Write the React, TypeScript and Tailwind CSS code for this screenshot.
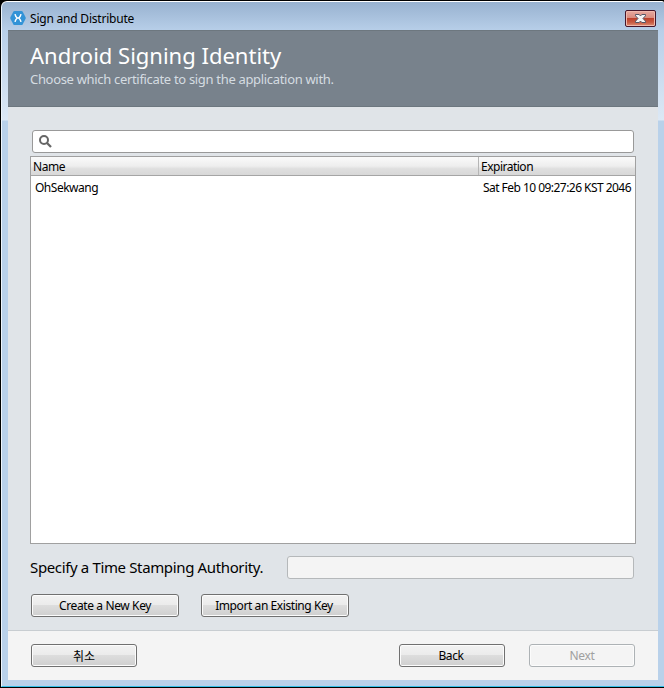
import React from "react";

type ButtonProps = {
  children: React.ReactNode;
  className?: string;
  disabled?: boolean;
};

function Button({ children, className = "", disabled = false }: ButtonProps) {
  const look = disabled
    ? "border-[#adb2b5] bg-[#f4f4f4] text-[#a0a0a0]"
    : "border-[#707070] bg-[linear-gradient(#f2f2f2_0%,#ebebeb_50%,#dddddd_50%,#cfcfcf_100%)] text-black";
  return (
    <button
      disabled={disabled}
      className={`flex h-[23px] shrink-0 items-center justify-center rounded-[3px] border text-[12px] leading-[16px] shadow-[inset_0_0_0_1px_#fcfcfc] ${look} ${className}`}
    >
      {children}
    </button>
  );
}

function AppIcon() {
  return (
    <svg width="16" height="16" viewBox="0 0 16 16" className="shrink-0">
      <path
        d="M4.600 .9h6.800q.8 0 1.200.7l3 5.700q.3.700 0 1.400l-3 5.700q-.4.700-1.200.700H4.600q-.8 0-1.200-.7L.4 8.700q-.3-.7 0-1.400l3-5.700Q3.800.9 4.600.9z"
        fill="#3293d7"
      />
      <path
        d="M5 4.200Q5.500 6.500 7.200 8 5.500 9.500 5 11.800M11 4.200Q10.500 6.500 8.800 8 10.500 9.500 11 11.800M7 8h2"
        fill="none"
        stroke="#fff"
        strokeWidth="1.500"
      />
    </svg>
  );
}

export default function App() {
  return (
    <div className="flex h-[688px] w-[664px] flex-col overflow-hidden bg-black font-['Noto_Sans','Noto_Sans_CJK_KR',sans-serif] text-black">
      <div className="mt-px ml-px flex h-[686px] flex-col rounded-tl-[6px] rounded-tr-[2px] border-t border-b border-l border-t-white border-b-[#35bfe8] border-l-[#eef5fc] bg-[linear-gradient(#98b2d0_0px,#b8cfe9_29px,#dce8f5_118px,#b9d1ea_119px,#b9d1ea_100%)] pr-[6px] pl-[6px]">
        <div className="flex h-[28px] shrink-0 items-start">
          <div className="mt-[8px] ml-[2px]">
            <AppIcon />
          </div>
          <span className="mt-[9px] ml-[4px] text-[12px] leading-[16px] tracking-[-0.21px] whitespace-nowrap">
            Sign and Distribute
          </span>
          <button
            aria-label="Close"
            className="mt-[8px] mr-[2px] ml-auto flex h-[17px] w-[31px] items-center justify-center rounded-[2px] border border-[#45162a] bg-[linear-gradient(#e6a99f_0%,#d98b7e_46%,#bd412c_50%,#c75a42_75%,#df9075_100%)] shadow-[inset_0_0_0_1px_#f0b8ac]"
          >
            <svg width="11" height="9" viewBox="0 0 11 9">
              <path d="M.5.5h3.700L5.500 2 6.800.5h3.700v1.300L8 4.500l2.500 2.700v1.300H6.800L5.500 7 4.200 8.500H.5V7.200L3 4.500.5 1.800z" fill="#f4f4f4" stroke="#535666" />
            </svg>
          </button>
        </div>

        <div className="flex h-[650px] w-[650px] flex-col bg-[#e0e4e8]">
          <header className="h-[77px] shrink-0 border-t border-b border-[#6d777f] bg-[#78828c] pl-[22px] whitespace-nowrap">
            <h1 className="mt-[8px] text-[22px] leading-[32px] text-white">Android Signing Identity</h1>
            <p className="text-[13px] leading-[16px] tracking-[-0.32px] text-[#d5dce1]">
              Choose which certificate to sign the application with.
            </p>
          </header>

          <main className="flex h-[523px] shrink-0 flex-col pr-[22px] pl-[22px]">
            <div className="mt-[23px] ml-[2px] flex h-[23px] w-[602px] shrink-0 items-center rounded-[3px] border border-[#999] bg-white pl-[6px]">
              <svg width="13" height="13" viewBox="0 0 13 13" fill="none" stroke="#666" strokeWidth="2">
                <circle cx="5" cy="5" r="4" />
                <path d="m8 8 4 4" strokeWidth="2.300" />
              </svg>
            </div>

            <div className="mt-[3px] h-[388px] w-[606px] shrink-0 border border-[#a0a0a0] bg-white text-[12px] whitespace-nowrap">
              <div className="flex h-[19px] border-b border-[#a5a5a5] bg-[linear-gradient(#fafafa_0%,#eeeeee_50%,#dfdfdf_65%,#d8d8d8_100%)] leading-[19px]">
                <div className="w-[448px] border-r border-[#b5b5b5] pl-[2px] tracking-[-0.45px]">Name</div>
                <div className="pl-[2px] tracking-[-0.5px]">Expiration</div>
              </div>
              <div className="flex h-[24px] justify-between pr-[4px] pl-[4px] leading-[24px]">
                <span className="tracking-[-0.5px]">OhSekwang</span>
                <span className="tracking-[-0.54px]">Sat Feb 10 09:27:26 KST 2046</span>
              </div>
            </div>

            <div className="mt-[12px] flex h-[23px] shrink-0 items-center">
              <span className="-mt-[2px] w-[257px] shrink-0 text-[15px] leading-[22px] tracking-[-0.36px] whitespace-nowrap">
                Specify a Time Stamping Authority.
              </span>
              <div className="h-[23px] w-[347px] rounded-[3px] border border-[#b5b8ba] bg-[#f4f4f4]" />
            </div>

            <div className="mt-[15px] ml-px flex gap-[22px]">
              <Button className="w-[148px] tracking-[-0.38px]">Create a New Key</Button>
              <Button className="w-[148px] pr-[2px] tracking-[-0.42px]">Import an Existing Key</Button>
            </div>
          </main>

          <footer className="flex h-[50px] shrink-0 items-start border-t border-[#c8cdd1] bg-[#f4f4f4] pt-[13px] pl-[23px]">
            <Button className="w-[106px] pt-[2px]">취소</Button>
            <Button className="ml-[262px] w-[106px] pr-[2px] tracking-[-0.4px]">Back</Button>
            <Button className="ml-[24px] w-[106px] tracking-[-0.3px]" disabled>
              Next
            </Button>
          </footer>
        </div>
      </div>
    </div>
  );
}
